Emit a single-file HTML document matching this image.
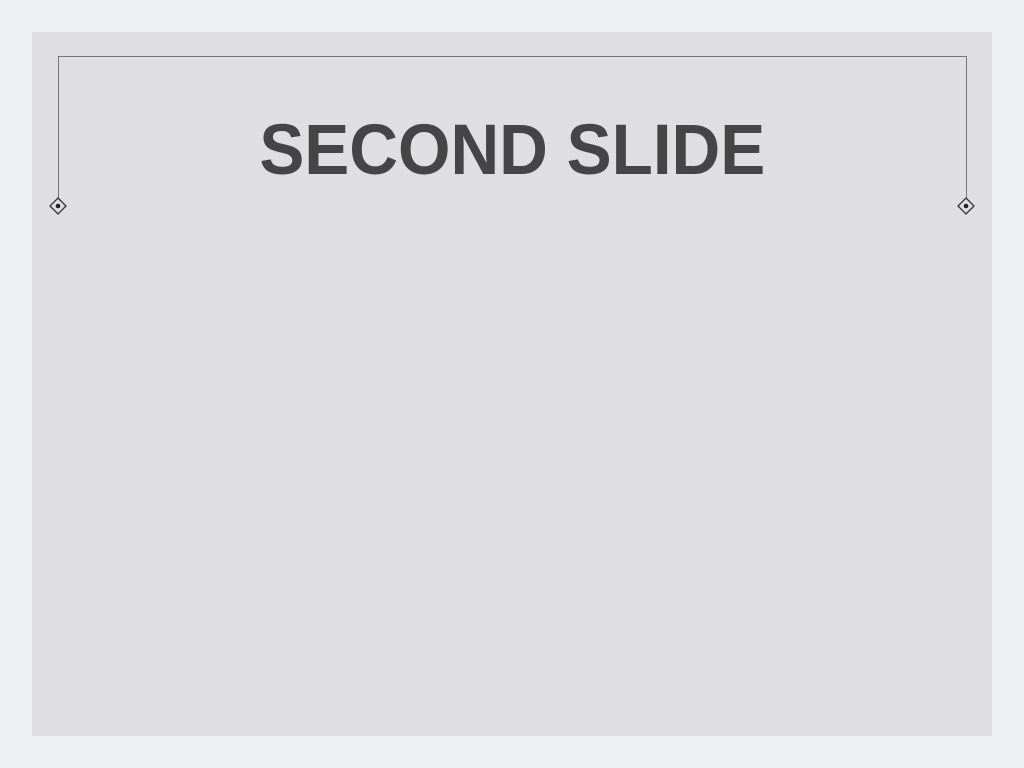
<!DOCTYPE html>
<html><head><style>
html,body{margin:0;padding:0;}
body{width:1024px;height:768px;background:#eeeff1;position:relative;overflow:hidden;}
.slide{position:absolute;left:32px;top:32px;width:960px;height:704px;background:#dfdfe1;}
.t{position:absolute;left:0;top:111px;width:1024px;text-align:center;font-family:"Liberation Sans",sans-serif;font-weight:bold;font-size:71px;line-height:80px;color:#454545;}
.t span{display:inline-block;transform:scaleX(0.95);transform-origin:center;}
svg{position:absolute;left:0;top:0;}
</style></head><body>
<div class="slide"></div>
<svg width="1024" height="768">
<path d="M58.5 199V56.5H966.5V199" fill="none" stroke="#777" stroke-width="1"/>
<path d="M58 198L66 206L58 214L50 206Z" fill="none" stroke="#333" stroke-width="1.3"/>
<circle cx="58" cy="206" r="2.3" fill="#222"/>
<path d="M966 198L974 206L966 214L958 206Z" fill="none" stroke="#333" stroke-width="1.3"/>
<circle cx="966" cy="206" r="2.3" fill="#222"/>
</svg>
<div class="t"><span>SECOND SLIDE</span></div>
</body></html>
